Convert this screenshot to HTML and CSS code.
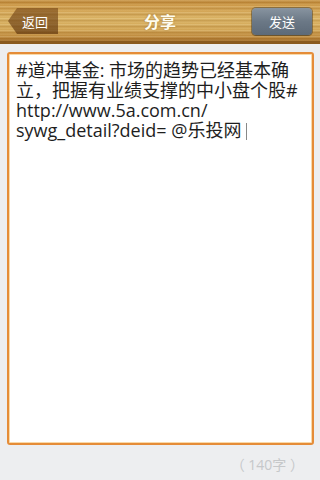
FILE: index.html
```html
<!DOCTYPE html>
<html lang="zh">
<head>
<meta charset="utf-8">
<title>分享</title>
<link rel="stylesheet" href="styles.css">
</head>
<body>
<header class="bar">
  <div class="back">返回</div>
  <div class="title">分享</div>
  <div class="send">发送</div>
</header>
<main class="content">
  <div class="editor">#道冲基金: 市场的趋势已经基本确<br>立，把握有业绩支撑的中小盘个股#<br>http://www.5a.com.cn/<br>sywg_detail?deid= @乐投网<span class="caret"></span></div>
  <div class="count">（ 140字 ）</div>
</main>
</body>
</html>
```
FILE: styles.css
```css
html, body {
  margin: 0;
  padding: 0;
}
body {
  width: 320px;
  height: 480px;
  background: #edeef0;
  font-family: "Open Sans", "Noto Sans CJK SC", sans-serif;
  overflow: hidden;
}
.bar {
  height: 41px;
  border-bottom: 3px solid #8a5a1f;
  display: flex;
  align-items: center;
  justify-content: space-between;
  padding: 0 8px;
  background:
    repeating-linear-gradient(180deg,
      rgba(255,240,200,0.22) 0px, rgba(255,240,200,0.22) 1px,
      rgba(120,70,10,0.14) 2px, rgba(120,70,10,0.14) 3px,
      rgba(255,235,190,0.14) 4px, rgba(255,235,190,0.00) 6px),
    linear-gradient(180deg, #bf8736 0%, #cf9d4c 18%, #d8b060 45%, #d2a655 70%, #b98235 92%, #a06b28 100%);
  position: relative;
}
.back {
  width: 50px;
  height: 26px;
  margin-top: 1px;
  background: linear-gradient(180deg, rgba(110,62,16,0.55), rgba(90,48,10,0.65));
  clip-path: polygon(0 50%, 9px 0, 100% 0, 100% 100%, 9px 100%);
  color: #fff;
  font-size: 13px;
  display: flex;
  align-items: center;
  justify-content: center;
  padding-left: 4px;
  box-sizing: border-box;
}
.title {
  position: absolute;
  left: 0;
  right: 0;
  top: 11px;
  text-align: center;
  color: #fffdf0;
  font-size: 16px;
  font-weight: bold;
  line-height: 22px;
  text-shadow: 0 0 2px rgba(120,80,20,0.5);
  pointer-events: none;
}
.send {
  width: 60px;
  height: 27px;
  margin-top: 1px;
  border-radius: 4px;
  background: linear-gradient(180deg, #8894a0 0%, #6b7886 50%, #5d6a78 100%);
  box-shadow: 0 0 0 1px rgba(70,60,40,0.5), 0 1px 1px rgba(80,50,10,0.4);
  color: #fff;
  font-size: 13px;
  display: flex;
  align-items: center;
  justify-content: center;
}
.content {
  padding: 8px 6px 0 7px;
}
.editor {
  height: 393px;
  box-sizing: border-box;
  border: 2px solid #e58c38;
  border-radius: 3px;
  box-shadow: inset 0 0 0 1px #f9d9a9;
  background: #fff;
  padding: 6px 6px 0 7px;
  font-size: 18px;
  line-height: 20px;
  color: #1e1e1e;
}
.caret {
  display: inline-block;
  width: 1px;
  height: 17px;
  background: #888;
  margin-left: 5px;
  vertical-align: -3px;
}
.count {
  text-align: right;
  padding-right: 10px;
  margin-top: 9px;
  font-size: 14px;
  color: #c6c8ca;
}
```
